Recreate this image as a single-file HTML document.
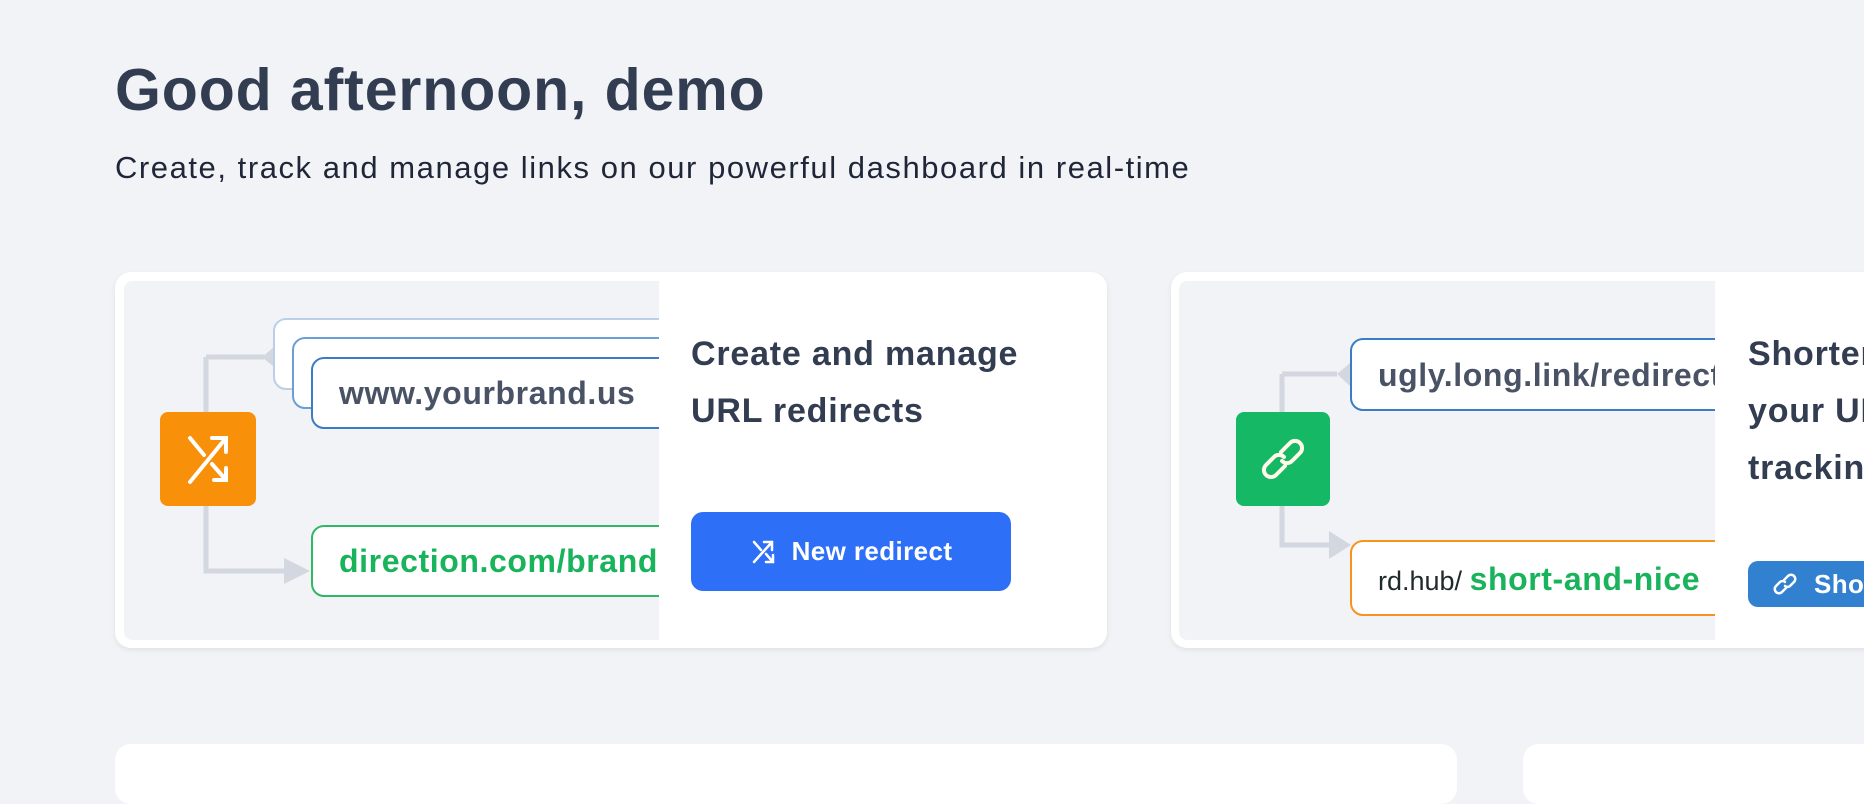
<!DOCTYPE html>
<html><head><meta charset="utf-8"><style>
*{box-sizing:border-box;margin:0;padding:0}
body{width:1864px;height:780px;background:#f1f3f7;font-family:"Liberation Sans",sans-serif;color:#333d52;position:relative;overflow:hidden}
.a{position:absolute}
h1{position:absolute;left:115px;top:56px;font-size:59px;font-weight:bold;color:#333d52;letter-spacing:0.9px}
.sub{left:115px;top:150px;font-size:31px;color:#1f2637;letter-spacing:1.55px}
.card{background:#fff;border-radius:16px;box-shadow:0 2px 6px rgba(0,0,0,.08)}
.panel{background:#f1f3f7;border-radius:8px 0 0 8px;overflow:hidden}
.box{position:absolute;background:#fff;border:2px solid #3b7cc4;border-radius:13px;height:72px;width:420px}
.t{font-size:32px;position:absolute;white-space:nowrap;font-weight:bold;letter-spacing:0.6px}
.title{font-size:34px;font-weight:bold;line-height:57px;color:#333d52;letter-spacing:0.8px}
.btn{border-radius:12px;color:#fff;font-size:26px;font-weight:bold;display:flex;align-items:center;justify-content:center;gap:14px;letter-spacing:0.4px}
</style></head><body>
<h1>Good afternoon, demo</h1>
<div class="a sub">Create, track and manage links on our powerful dashboard in real-time</div>

<div class="a card" style="left:115px;top:272px;width:992px;height:376px"></div>
<div class="a panel" style="left:124px;top:281px;width:535px;height:359px">
  <svg class="a" style="left:0;top:0" width="535" height="359">
    <path d="M82 76 V290 H160" stroke="#d3d7df" stroke-width="5" fill="none"/>
    <path d="M82 76 H140" stroke="#d3d7df" stroke-width="5" fill="none"/>
    <path d="M150 66 L138 76 L150 86Z" fill="#d3d7df"/>
    <path d="M160 277 L186 290 L160 303Z" fill="#d3d7df"/>
  </svg>
  <div class="box" style="left:149px;top:37px;border-color:#b9d0e8"></div>
  <div class="box" style="left:168px;top:56px;border-color:#6a9fd6"></div>
  <div class="box" style="left:187px;top:76px"><span class="t" style="left:26px;top:16px;color:#4a5366">www.yourbrand.us</span></div>
  <div class="box" style="left:187px;top:244px;border-color:#2fb866"><span class="t" style="left:26px;top:16px;color:#18b35a">direction.com/brand</span></div>
  <div class="a" style="left:36px;top:131px;width:96px;height:94px;background:#f8900a;border-radius:8px">
    <svg width="96" height="94" viewBox="0 0 96 94" fill="none" stroke="#fff" stroke-width="4" stroke-linecap="round"><path d="M30 70 L66 26 M52 26 H66 V40 M30 26 L44 43 M52 52 L66 68 M66 56 V68 H54"/></svg>
  </div>
</div>
<div class="a title" style="left:691px;top:326px">Create and manage<br>URL redirects</div>
<div class="a btn" style="left:691px;top:512px;width:320px;height:79px;background:#2e6ff7">
  <svg width="28" height="28" viewBox="0 0 28 28" fill="none" stroke="#fff" stroke-width="2.5" stroke-linecap="round"><path d="M4 24 L22 4 M14 4 H22 V12 M4 4 L11 12 M16 16 L23 24 M23 17 V24 H16"/></svg>New redirect</div>

<div class="a card" style="left:1171px;top:272px;width:760px;height:376px"></div>
<div class="a panel" style="left:1179px;top:281px;width:536px;height:359px">
  <svg class="a" style="left:0;top:0" width="536" height="359">
    <path d="M103 93 V264 H150" stroke="#d3d7df" stroke-width="5" fill="none"/>
    <path d="M103 93 H158" stroke="#d3d7df" stroke-width="5" fill="none"/>
    <path d="M171 82 L158 93 L171 105Z" fill="#d3d7df"/>
    <path d="M150 250 L172 264 L150 278Z" fill="#d3d7df"/>
  </svg>
  <div class="box" style="left:171px;top:57px;height:73px"><span class="t" style="left:26px;top:17px;color:#4a5366">ugly.long.link/redirect</span></div>
  <div class="box" style="left:171px;top:259px;height:76px;border-color:#f7941d"><span class="t" style="left:26px;top:19px;color:#1f2a2a;font-size:27px;font-weight:normal;letter-spacing:0">rd.hub/ <span style="color:#18b35a;font-size:32px;font-weight:bold;letter-spacing:0.6px">short-and-nice</span></span></div>
  <div class="a" style="left:57px;top:131px;width:94px;height:94px;background:#15b865;border-radius:8px">
    <svg width="94" height="94" viewBox="0 0 94 94" fill="none" stroke="#fff8e8" stroke-width="4" stroke-linecap="round"><path d="M45 40 L54 31 a7 7 0 0 1 10 10 L56 49 a7 7 0 0 1 -10 0"/><path d="M49 54 L40 63 a7 7 0 0 1 -10 -10 L38 45 a7 7 0 0 1 10 0"/></svg>
  </div>
</div>
<div class="a title" style="left:1748px;top:326px;white-space:nowrap">Shorten<br>your URLs<br>tracking</div>
<div class="a btn" style="left:1748px;top:561px;width:200px;height:46px;background:#3181d0;justify-content:flex-start;padding-left:22px;border-radius:10px">
  <svg width="30" height="30" viewBox="0 0 30 30" fill="none" stroke="#fff" stroke-width="2.5" stroke-linecap="round"><path d="M14 11 L18 7 a4 4 0 0 1 6 6 L20 17 a4 4 0 0 1 -5 0"/><path d="M16 19 L12 23 a4 4 0 0 1 -6 -6 L10 13 a4 4 0 0 1 5 0"/></svg>Shorten</div>

<div class="a" style="left:115px;top:744px;width:1342px;height:60px;background:#fff;border-radius:16px"></div>
<div class="a" style="left:1523px;top:744px;width:400px;height:60px;background:#fff;border-radius:16px"></div>
</body></html>
